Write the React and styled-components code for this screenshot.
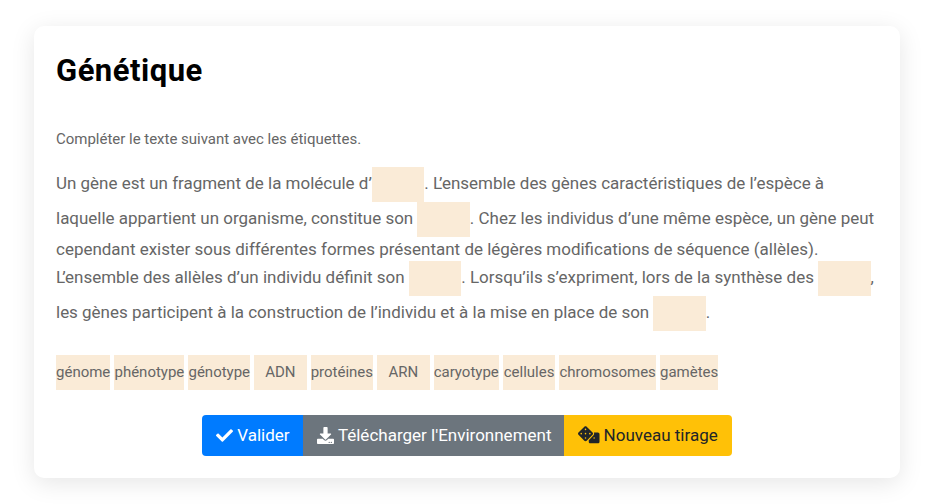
import React from "react";
import styled, { createGlobalStyle } from "styled-components";
import { FaCheck, FaDownload, FaDice } from "react-icons/fa";

const GlobalStyle = createGlobalStyle`
  *, *::before, *::after { box-sizing: border-box; }
  html { font-size: 15px; }
  body {
    margin: 0;
    background: #fff;
    color: #666;
    font-family: Roboto, sans-serif;
    font-size: 15px;
    line-height: 1.5;
  }
`;

const Page = styled.main`
  padding: 26px 33px 26px 34px;
`;

const Card = styled.section`
  height: 452px;
  padding: 22px 22px 0;
  border-radius: 10px;
  background: #fff;
  box-shadow: 0 5px 25px rgba(0, 0, 0, 0.1);
`;

const Title = styled.h1`
  margin: 0 0 35px;
  padding-top: 1px;
  color: #000;
  font-size: 31px;
  font-weight: 700;
  line-height: 44px;
  letter-spacing: 0.5px;
`;

const Instruction = styled.p`
  margin: 0 0 17px;
  line-height: 22px;
  letter-spacing: -0.015px;
`;

const Exercise = styled.p`
  margin: 0;
  font-size: 16.98px;
  line-height: 24.4px;
`;

const KernedCapital = styled.span`
  letter-spacing: -3px;
`;

const Slot = styled.span`
  display: inline-block;
  min-width: 52.4px;
  height: 35px;
  background: antiquewhite;
  vertical-align: middle;
`;

const NoBreak = styled.span`
  white-space: nowrap;
`;

const LabelRow = styled.div`
  display: flex;
  gap: 4.15px;
  margin-top: 23.6px;
`;

const Label = styled.span`
  min-width: 52.3px;
  height: 35px;
  background: antiquewhite;
  line-height: 35px;
  text-align: center;
`;

const Actions = styled.div`
  display: flex;
  justify-content: center;
  margin-top: 25px;
`;

const variants = {
  primary: ["#007bff", "#fff"],
  secondary: ["#6c757d", "#fff"],
  warning: ["#ffc107", "#212529"],
};

const Button = styled.button`
  display: flex;
  align-items: center;
  gap: 4px;
  height: 41px;
  padding: 0 13.3px 1px 14px;
  border: 0;
  background: ${({ $variant }) => variants[$variant][0]};
  color: ${({ $variant }) => variants[$variant][1]};
  font: 400 17px/24px Roboto, sans-serif;
  white-space: nowrap;

  &:first-child { border-radius: 4px 0 0 4px; }
  &:nth-child(2) { padding-right: 12.6px; }
  &:last-child { padding-right: 14px; border-radius: 0 4px 4px 0; }
`;

const labels = [
  "génome", "phénotype", "génotype", "ADN", "protéines",
  "ARN", "caryotype", "cellules", "chromosomes", "gamètes",
];

export default function App() {
  return (
    <Page>
      <GlobalStyle />
      <Card>
        <Title>Génétique</Title>
        <Instruction>Compléter le texte suivant avec les étiquettes.</Instruction>
        <Exercise>
          Un gène est un fragment de la molécule d’<Slot />.{" "}
          <KernedCapital>L</KernedCapital>’ensemble des gènes
          caractéristiques de l’espèce à<br />laquelle appartient un organisme, constitue
          son <Slot />. Chez les individus d’une même espèce, un gène peut cependant
          exister sous différentes formes présentant de légères modifications de
          séquence (allèles).
          <br />
          <KernedCapital>L</KernedCapital>’ensemble des allèles d’un individu définit son <Slot />. Lorsqu’ils
          s’expriment, lors de la synthèse des <NoBreak><Slot />,</NoBreak> les gènes participent à la
          construction de l’individu et à la mise en place de son <Slot />.
        </Exercise>
        <LabelRow>
          {labels.map((label) => <Label key={label}>{label}</Label>)}
        </LabelRow>
        <Actions>
          <Button $variant="primary"><FaCheck />Valider</Button>
          <Button $variant="secondary"><FaDownload />Télécharger l'Environnement</Button>
          <Button $variant="warning"><FaDice size={21.5} />Nouveau tirage</Button>
        </Actions>
      </Card>
    </Page>
  );
}
